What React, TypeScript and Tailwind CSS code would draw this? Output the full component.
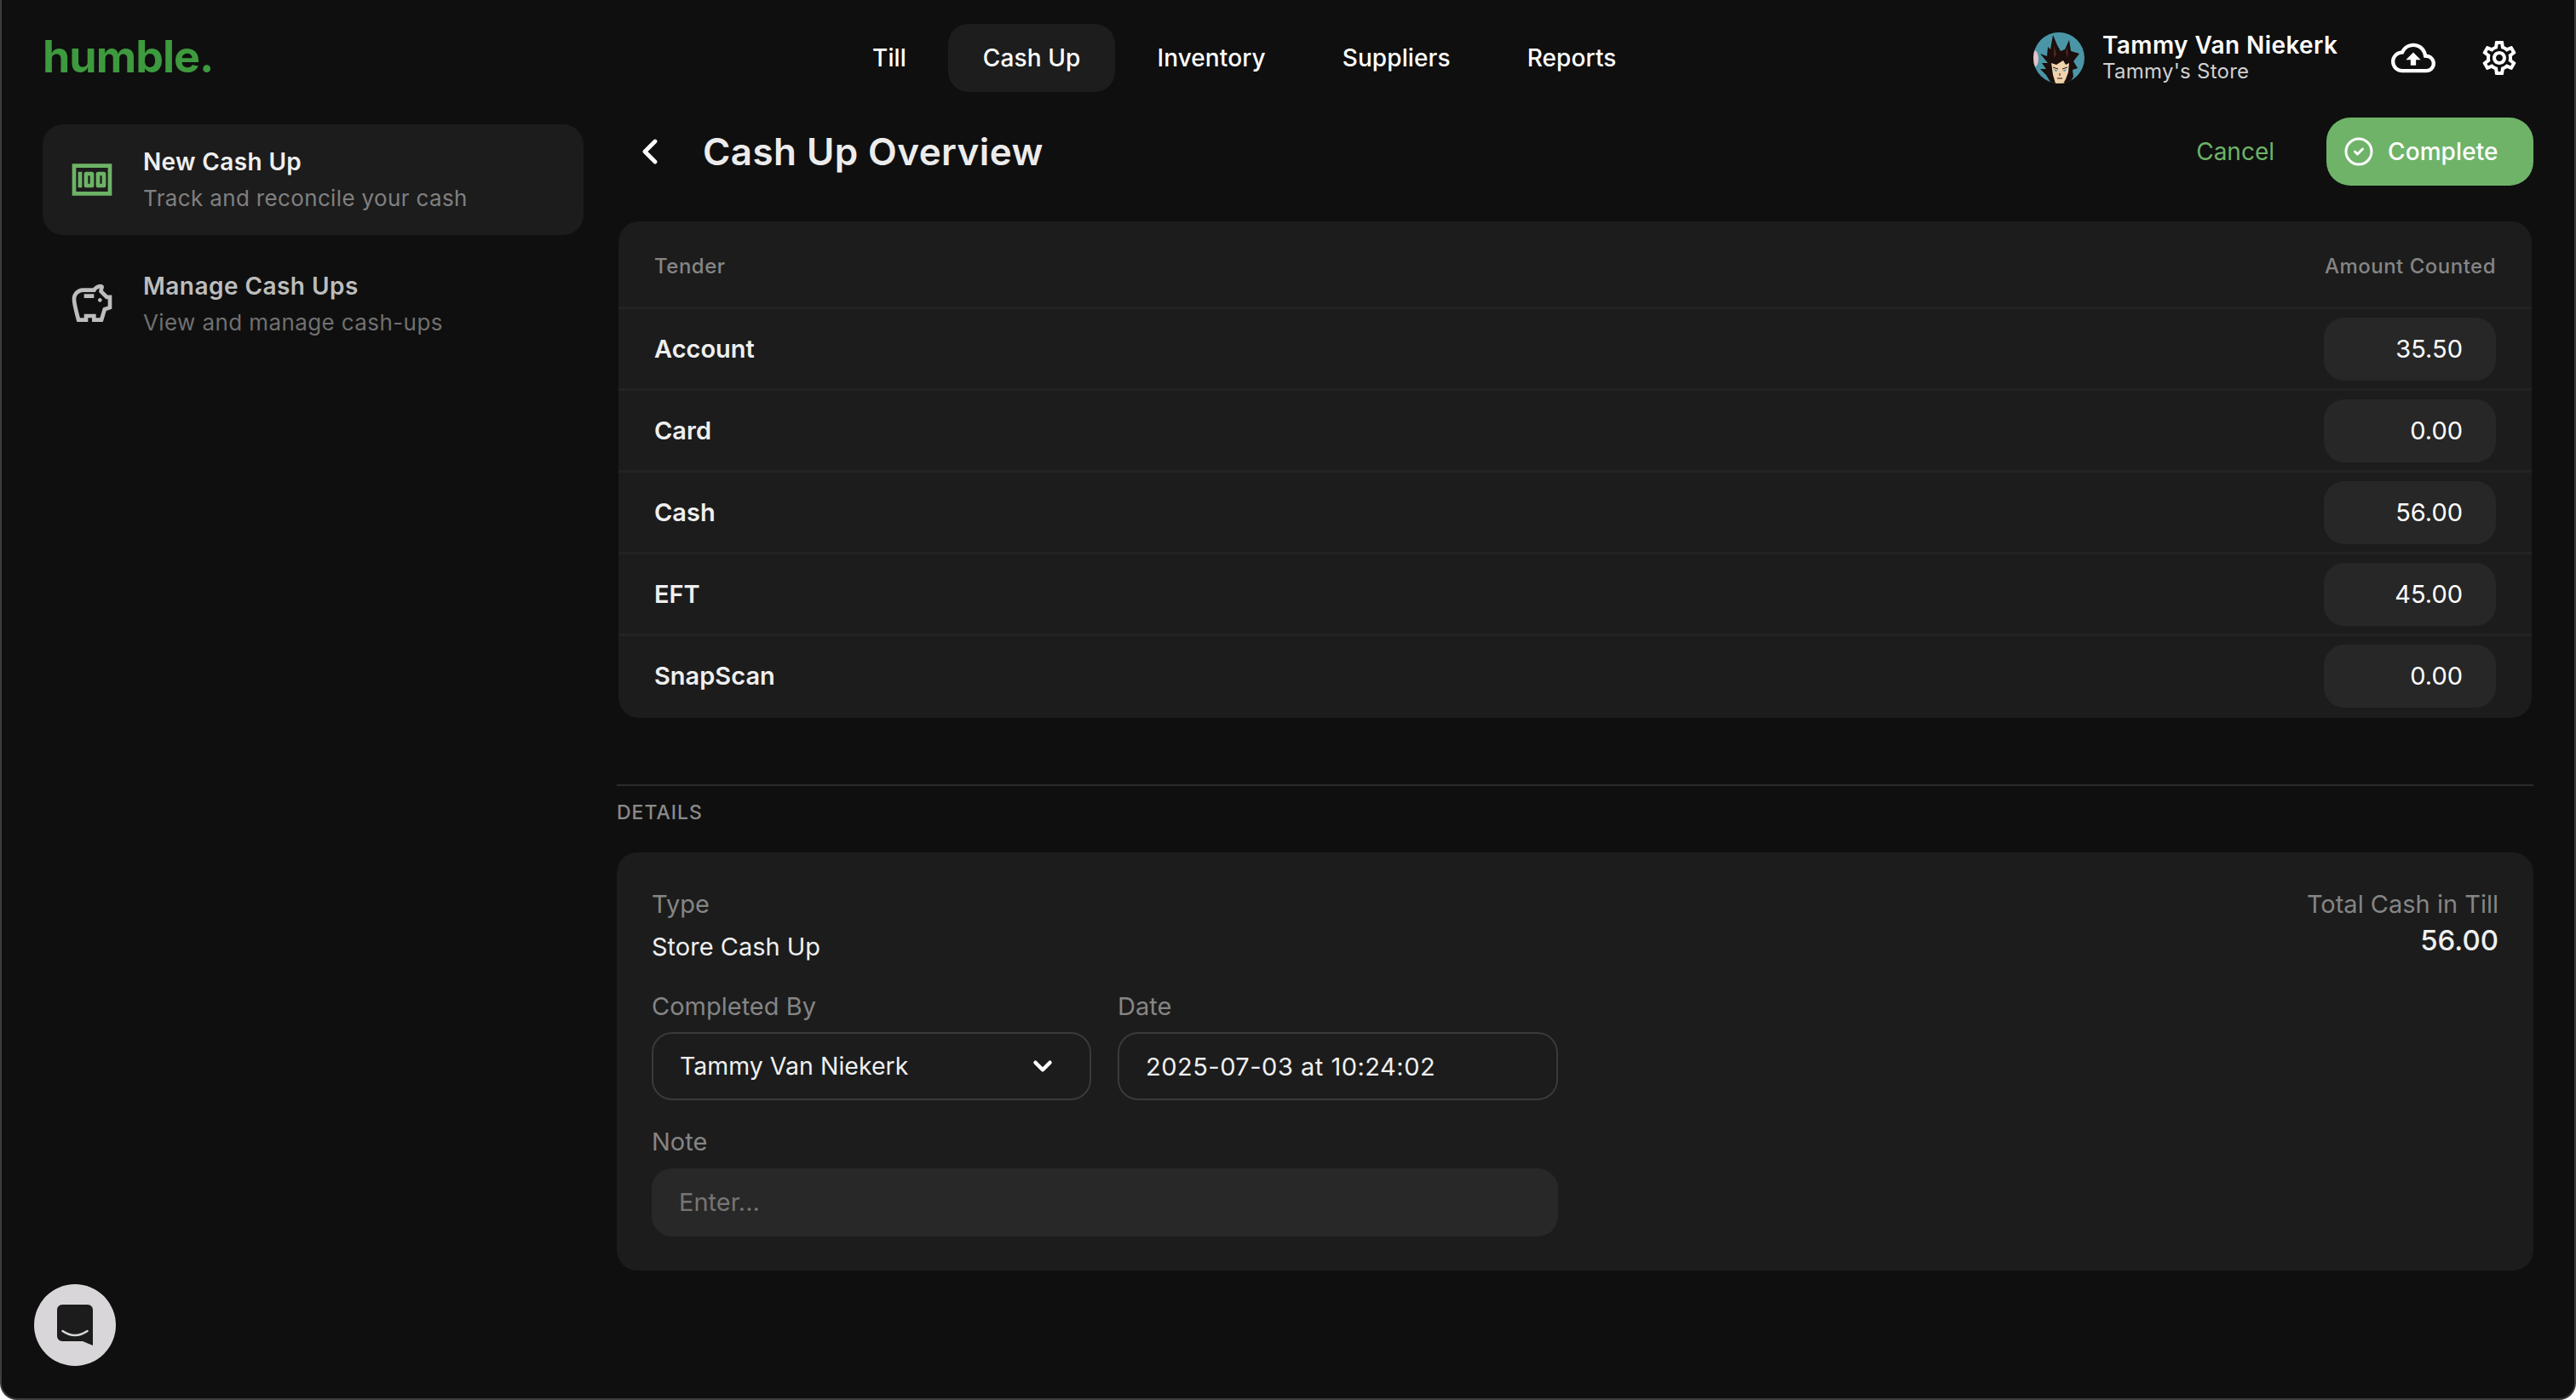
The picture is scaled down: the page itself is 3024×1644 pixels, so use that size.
import React from "react";
import { MdOutlineMoney, MdOutlineSavings, MdOutlineCloudUpload, MdOutlineSettings } from "react-icons/md";
import { ChevronLeft, ChevronDown, CircleCheck } from "lucide-react";

function Avatar() {
  return (
    <svg viewBox="0 0 60 60" className="w-[60px] h-[60px] shrink-0">
      <defs>
        <clipPath id="av"><circle cx="30" cy="30" r="30" /></clipPath>
      </defs>
      <g clipPath="url(#av)">
        <rect width="60" height="60" fill="#4a96a6" />
        <ellipse cx="1" cy="31" rx="5" ry="10" fill="#e3c3c8" />
        <path d="M21 60 L15 50 L8 43 L15 43 L10 36 L17 36 L8 25 L16 28 L17 17 L20 20 L23 3 L28 15 L32 22 L37 20 L42 9 L44 22 L54 25 L47 34 L52 42 L46 44 L47 52 L42 60 Z" fill="#1b0e0c" />
        <path d="M24 14 L27 26 L24 30 Z M38 24 L40 16 L41 30 Z" fill="#4a2a22" />
        <path d="M21 36 L27 38 L35 33 L38 38 L42 36 L41 47 L38 55 L35 60 L26 60 L23 50 Z" fill="#f0d2ac" />
        <path d="M24 43 L29 45 L26 46 Z M39 43 L34 45 L37 46 Z" fill="#3f95c0" />
        <path d="M23 41 L29 43 M40 41 L34 43 M31 48 L31 51 M28 54 L34 54" stroke="#2a1612" strokeWidth="1" fill="none" />
        <path d="M26 60 L30 57 L40 60 Z" fill="#e8c79a" />
      </g>
    </svg>
  );
}

function ChatIcon() {
  return (
    <svg viewBox="0 0 42 48" className="w-[42px] h-[48px]">
      <path d="M6 0 H36 A6 6 0 0 1 42 6 V48 L30 43 H6 A6 6 0 0 1 0 37 V6 A6 6 0 0 1 6 0 Z" fill="#1c1c1c" />
      <path d="M6.5 31 Q21 41 35.5 31" stroke="#d9d6da" strokeWidth="2.6" fill="none" strokeLinecap="round" />
    </svg>
  );
}

const navItems = ["Till", "Cash Up", "Inventory", "Suppliers", "Reports"];
const rows = [
  ["Account", "35.50"],
  ["Card", "0.00"],
  ["Cash", "56.00"],
  ["EFT", "45.00"],
  ["SnapScan", "0.00"],
];

export default function App() {
  return (
    <div className="relative w-[3024px] h-[1644px] overflow-hidden bg-[#0f0f0f] border-x-2 border-b-2 border-[#3d3d3d] rounded-b-[20px] font-[family-name:Inter,sans-serif] text-white">
      <header className="h-[138px] flex items-start pt-[28px]">
        <div className="ml-[48px] w-[933px] shrink-0 h-[80px] flex items-center">
          <span className="font-bold text-[52px] leading-none tracking-[-1px] text-[#3d9a3e] -mt-[3px]">humble.</span>
        </div>
        <nav className="flex gap-[8px]">
          {navItems.map((n) => (
            <div
              key={n}
              className={`h-[80px] px-[41px] flex items-center rounded-[24px] text-[28px] font-medium tracking-[0.1px] ${n === "Cash Up" ? "bg-[#1d1d1d]" : ""}`}
            >
              {n}
            </div>
          ))}
        </nav>
        <div className="ml-auto mr-[64px] h-[80px] flex items-center">
          <Avatar />
          <div className="ml-[21px] -mt-[2px] flex flex-col w-[339px]">
            <span className="text-[28px] leading-[34px] font-semibold tracking-[0.4px]">Tammy Van Niekerk</span>
            <span className="text-[24px] leading-[28px] tracking-[0.25px] text-[#d0d0d0]">Tammy's Store</span>
          </div>
          <MdOutlineCloudUpload size={52} className="text-white" />
          <MdOutlineSettings size={48} className="ml-[51px] text-white" />
        </div>
      </header>

      <div className="flex">
        <aside className="ml-[48px] w-[635px] shrink-0 pt-[8px] flex flex-col gap-[16px]">
          <div className="h-[130px] rounded-[24px] bg-[#1c1c1c] flex items-center pl-[30px]">
            <MdOutlineMoney size={56} className="text-[#6db366] shrink-0" />
            <div className="ml-[32px] flex flex-col gap-[10px]">
              <span className="text-[28px] leading-[34px] font-semibold tracking-[0.35px] text-[#efefef]">New Cash Up</span>
              <span className="text-[26px] leading-[32px] tracking-[0.35px] text-[#808080]">Track and reconcile your cash</span>
            </div>
          </div>
          <div className="h-[130px] rounded-[24px] flex items-center pl-[30px]">
            <MdOutlineSavings size={56} className="text-[#bdbdbd] shrink-0" />
            <div className="ml-[32px] flex flex-col gap-[10px]">
              <span className="text-[28px] leading-[34px] font-semibold tracking-[0.45px] text-[#bdbdbd]">Manage Cash Ups</span>
              <span className="text-[26px] leading-[32px] tracking-[0.4px] text-[#707070]">View and manage cash-ups</span>
            </div>
          </div>
        </aside>

        <main className="ml-[39px] w-[2250px] shrink-0">
          <div className="h-[80px] flex items-center">
            <ChevronLeft size={48} strokeWidth={2.4} className="ml-[15px] text-white" />
            <h1 className="ml-[38px] text-[44px] font-semibold tracking-[0.4px] text-[#ececec]">Cash Up Overview</h1>
            <span className="ml-auto text-[28px] text-[#6db366]">Cancel</span>
            <button className="ml-[61px] w-[243px] h-[80px] rounded-[28px] bg-[#6fb368] flex items-center pl-[20px]">
              <CircleCheck size={36} strokeWidth={2} className="text-white" />
              <span className="ml-[16px] text-[28px] font-medium tracking-[0.1px] text-white">Complete</span>
            </button>
          </div>

          <section className="mt-[42px] mx-[2px] rounded-[24px] bg-[#1c1c1c] pb-[3px]">
            <div className="h-[100px] px-[42px] pt-[6px] flex items-center justify-between text-[24px] font-medium tracking-[0.5px] text-[#858585]">
              <span>Tender</span>
              <span>Amount Counted</span>
            </div>
            {rows.map(([label, value]) => (
              <div key={label} className="h-[96px] border-t-[3px] border-[#232323] px-[42px] flex items-center justify-between">
                <span className="text-[29px] font-semibold text-[#efefef]">{label}</span>
                <div className="w-[202px] h-[74px] mt-[1px] rounded-[24px] bg-[#272727] flex items-center justify-end pr-[39px] text-[29px] text-white">
                  {value}
                </div>
              </div>
            ))}
          </section>

          <div className="mt-[78px] h-[2px] bg-[#2b2b2b]" />
          <div className="mt-[18px] h-[26px] flex items-center text-[23px] font-medium tracking-[1px] text-[#8a8a8a]">DETAILS</div>

          <section className="mt-[34px] h-[491px] rounded-[24px] bg-[#1c1c1c] px-[41px] pt-[41px] relative">
            <div className="flex justify-between">
              <div className="flex flex-col">
                <span className="text-[29px] leading-[40px] text-[#858585]">Type</span>
                <span className="mt-[10px] text-[29px] leading-[40px] text-[#efefef]">Store Cash Up</span>
              </div>
              <div className="flex flex-col items-end">
                <span className="text-[29px] leading-[40px] text-[#858585]">Total Cash in Till</span>
                <span className="text-[33px] leading-[44px] font-medium text-[#efefef]">56.00</span>
              </div>
            </div>
            <div className="mt-[30px] flex gap-[31px]">
              <div className="w-[516px]">
                <div className="text-[29px] leading-[40px] text-[#858585]">Completed By</div>
                <div className="mt-[10px] h-[80px] rounded-[24px] border-2 border-[#3a3a3a] flex items-center justify-between pl-[31px] pr-[38px] text-[28.5px] text-[#efefef]">
                  <span>Tammy Van Niekerk</span>
                  <ChevronDown size={34} strokeWidth={3.2} className="text-white" />
                </div>
              </div>
              <div className="w-[517px]">
                <div className="text-[29px] leading-[40px] text-[#858585]">Date</div>
                <div className="mt-[10px] h-[80px] rounded-[24px] border-2 border-[#3a3a3a] flex items-center pl-[31px] pt-[2px] text-[29px] tracking-[0.5px] text-[#efefef]">
                  2025-07-03 at 10:24:02
                </div>
              </div>
            </div>
            <div className="mt-[29px] w-[1064px]">
              <div className="text-[29px] leading-[40px] text-[#858585]">Note</div>
              <div className="mt-[11px] h-[80px] rounded-[24px] bg-[#282828] flex items-center pl-[32px] text-[29px] text-[#757575]">Enter...</div>
            </div>
          </section>
        </main>
      </div>

      <div className="absolute left-[38px] top-[1508px] w-[96px] h-[96px] rounded-full bg-[#d9d6da] flex items-center justify-center">
        <ChatIcon />
      </div>
    </div>
  );
}
